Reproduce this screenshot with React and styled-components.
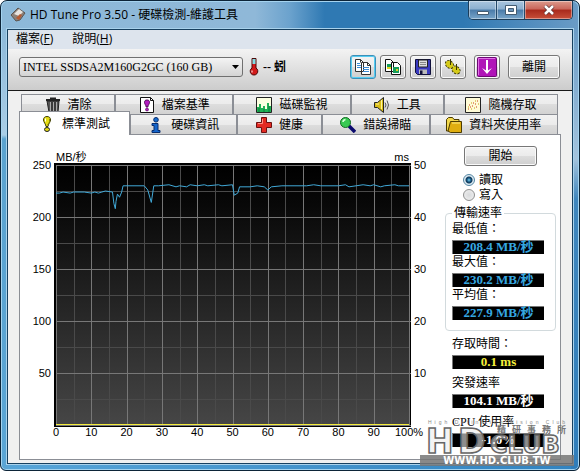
import React, { useState } from 'react';
import styled, { createGlobalStyle, css } from 'styled-components';

const SANS = "'Liberation Sans', 'Noto Sans CJK TC', sans-serif";
const SERIF = "'Liberation Serif', 'Noto Sans CJK TC', serif";
const CAPTION = "'Open Sans', 'Noto Sans CJK TC', sans-serif";

const GlobalStyle = createGlobalStyle`
  *, *::before, *::after {
    box-sizing: border-box;
  }
  body {
    margin: 0;
    background: white;
    color: black;
    font-family: ${SERIF};
    font-size: 12px;
    line-height: 14px;
  }
  button, select {
    font: inherit;
    color: inherit;
  }
`;

const Window = styled.div`
  position: relative;
  display: flex;
  flex-direction: column;
  min-height: 100vh;
  padding: 0 6px 6px;
  border: 1px solid #0c2438;
  border-radius: 7px 7px 6px 6px;
  box-shadow: inset 0 0 0 1px #a5d3ef;
  background:
    linear-gradient(to bottom, #6b9cc6 0, #a3c3dd 130px, #3f86bd 170px, #2f7dba 100%) right bottom / 8px calc(100% - 28px) no-repeat,
    linear-gradient(to bottom, #8db9d9 0, #a9cde6 106px, #5ba3d0 110px, #5aa5d5 100%) left bottom / 8px calc(100% - 28px) no-repeat,
    linear-gradient(to right, #8db9d9 0, #8fb8d8 44%, #6ba2cd 50%, #2f79b3 56%, #2f79b3 80%, #6b9cc6 100%) top / 100% 60px no-repeat,
    linear-gradient(to right, #58a5d8, #3183c0);
`;
const TitleBar = styled.header`
  display: flex;
  align-items: flex-start;
  height: 27px;
  padding-left: 3px;
`;
const TitleIcon = styled.svg`
  width: 16px;
  height: 16px;
  margin: 5px 4px 0 0;
`;
const Title = styled.h1`
  flex: 1;
  margin: 0;
  font-family: ${CAPTION};
  font-size: 12px;
  font-weight: 400;
  line-height: 28px;
`;
const Controls = styled.div`
  display: flex;
  height: 19px;
  border: 1px solid #1c3d5a;
  border-top: 0;
  border-radius: 0 0 5px 5px;
  overflow: hidden;
`;
const ControlButton = styled.button`
  display: flex;
  align-items: center;
  justify-content: center;
  width: ${({ $close }) => $close ? '47px' : '28px'};
  padding: 0;
  border: 0;
  border-right: ${({ $close }) => $close ? '0' : '1px solid #24496a'};
  box-shadow: inset 0 0 0 1px rgba(255, 255, 255, 0.4);
  background: ${({ $close }) => $close
    ? 'linear-gradient(#dc9a8c 0, #c9665a 45%, #a92a1c 50%, #c8503a 100%)'
    : 'linear-gradient(#a9c5de 0, #8bafcf 45%, #4a7ba9 50%, #78a5ca 100%)'};
`;
const Client = styled.main`
  flex: 1;
  display: flex;
  flex-direction: column;
  margin: 1px 0 0;
  border: 1px solid #17405f;
  outline: 1px solid #a9d2ec;
  background: #f0f0f0;
`;
const MenuBar = styled.nav`
  display: flex;
  gap: 19px;
  height: 19px;
  padding: 0 8px;
  background: #dde4ed;
  font-family: ${CAPTION};
  line-height: 18px;
`;
const MenuItem = styled.a`
  color: black;
  text-decoration: none;
`;
const Toolbar = styled.div`
  display: flex;
  align-items: center;
  height: 42px;
  padding: 0 12px 5px 11px;
  border-bottom: 1px solid #1a1a1a;
  background: linear-gradient(#f3f3f3, #cccccc);
`;
const DriveBox = styled.div`
  position: relative;
  flex: 0 1 224px;
`;
const DriveSelect = styled.select`
  display: block;
  width: 100%;
  height: 20px;
  padding: 0 20px 0 3px;
  appearance: none;
  border: 1px solid #707070;
  border-radius: 3px;
  background: linear-gradient(#f4f4f4, #d4d4d4);
  font-family: ${SERIF};
  font-size: 12px;
`;
const DriveArrow = styled.svg`
  position: absolute;
  top: 8px;
  right: 4px;
  width: 7px;
  height: 4px;
  pointer-events: none;
`;
const Temperature = styled.div`
  display: flex;
  flex: 1;
  align-items: center;
  gap: 4px;
  padding-left: 6px;
  font-weight: 700;
`;
const Tools = styled.div`
  display: flex;
  gap: 4px;
  margin-right: 8px;
`;
const buttonFace = css`
  border: 1px solid #777777;
  border-radius: 3px;
  box-shadow: inset 0 0 0 1px #fafafa;
  background: linear-gradient(#f3f3f3 0, #ebebeb 50%, #dddddd 50%, #cfcfcf 100%);
  font-family: ${SANS};
`;
const ToolButton = styled.button`
  ${buttonFace}
  display: flex;
  align-items: center;
  justify-content: center;
  width: 26px;
  height: 24px;
  padding: 0;

  ${({ $focused }) => $focused && css`
    border-color: #3c8fb8;
    box-shadow: inset 0 0 0 1px #55cdf2;
  `}
`;
const PushButton = styled.button`
  ${buttonFace}
  width: ${({ $wide }) => $wide ? '73px' : '52px'};
  height: ${({ $wide }) => $wide ? '20px' : '24px'};
  padding: 0;
`;
const Body = styled.div`
  flex: 1;
  display: flex;
  flex-direction: column;
  padding: 3px 11px;
`;
const TabRow = styled.div`
  display: grid;
  grid-template-columns: ${({ $columns }) => $columns};
  height: 20px;
  padding: 0 3px 0 ${({ $inset }) => $inset ? '2px' : '0'};
`;
const TabButton = styled.button`
  display: flex;
  align-items: center;
  justify-content: center;
  gap: 7px;
  min-width: 0;
  padding: 0;
  border: 1px solid #8b8e95;
  border-width: 1px 1px 0 1px;
  background: linear-gradient(#f2f2f2 0, #ebebeb 50%, #dddddd 50%, #d2d2d2 100%);
  font-family: ${SANS};
  line-height: 14px;
  white-space: nowrap;

  svg {
    flex: none;
    width: 16px;
    height: 16px;
  }

  ${({ $active }) => $active && css`
    z-index: 1;
    margin: -3px 0 -1px;
    background: white;
  `}
`;
const Panel = styled.section`
  flex: 1;
  display: flex;
  padding-right: 4px;
  border: 1px solid #8b8e95;
  background: white;
`;
const ChartArea = styled.div`
  flex: 1;
  min-width: 0;
`;
const ChartSvg = styled.svg`
  display: block;
  width: 100%;
  font-family: ${SANS};
  font-size: 11px;
`;
const Side = styled.aside`
  display: flex;
  flex-direction: column;
  flex: none;
  width: 111px;
  padding-top: 11px;
  font-family: ${SERIF};

  > button {
    align-self: center;
  }
`;
const Modes = styled.div`
  padding: 6px 0 4px 18px;
`;
const ModeLabel = styled.label`
  display: flex;
  align-items: center;
  gap: 4px;
  height: 15px;
`;
const ModeInput = styled.input`
  width: 12px;
  height: 12px;
  margin: 0;
  appearance: none;
  border: 1px solid #8e8f8f;
  border-radius: 50%;
  background: radial-gradient(circle, #d8dadc 0, #f2f2f2 100%);

  &:checked {
    border-color: #5586a3;
    background: radial-gradient(circle, #7ed3f3 0, #12547f 2px, #12395a 3px, #dcebf3 4px);
  }
`;
const Rates = styled.fieldset`
  min-width: 0;
  height: 125px;
  margin: 0 0 6px;
  padding: 2px 11px 0 6px;
  border: 1px solid #d2dadd;
  border-radius: 4px;

  legend {
    padding: 0 2px;
  }
`;
const Others = styled.div`
  padding: 0 12px 0 7px;
`;
const ReadingBlock = styled.div`
  margin-bottom: ${({ $loose }) => $loose ? '7px' : '1px'};
`;
const ReadingValue = styled.output`
  display: block;
  height: 14px;
  margin-top: 4px;
  border-top: 1px solid #777777;
  border-left: 1px solid #777777;
  background: black;
  color: ${({ $color }) => $color};
  font-size: 13px;
  font-weight: 700;
  line-height: 12px;
  text-align: center;
`;
const Watermark = styled.svg`
  position: absolute;
  right: 5px;
  bottom: 2px;
  width: 154px;
  height: 48px;
  pointer-events: none;
`;

const Trash = () => (
  <svg viewBox="0 0 16 16">
    <path d="M2 4h12l-1 11H4z" fill="#555" stroke="#222" />
    <path d="M1 3h14M5 1.5h6" stroke="#222" strokeWidth="2" />
    <path d="M5.5 5v9M8.5 5v9M11.5 5v9" stroke="#aaa" />
    <path d="M7 5v9M10 5v9" stroke="#222" />
  </svg>
);
const Bang = () => (
  <svg viewBox="0 0 16 16">
    <path d="M8 .5C5.5.5 4.5 2 4.5 4S7 8.500 7 10.500h2c0-2 2.500-4.500 2.500-6.500S10.500.5 8 .5z" fill="#e6dd13" stroke="#3a3a00" />
    <ellipse cx="8" cy="13.5" rx="2.5" ry="2" fill="#e6dd13" stroke="#222" />
    <path d="M6.5 2.500v3" stroke="#fff" />
    <path d="M10.500 3v3l-2 3" fill="none" stroke="#8d8608" />
  </svg>
);
const FileBench = () => (
  <svg viewBox="0 0 16 16">
    <path d="M1.5.5h10l3 3v12h-13z" fill="#fff" stroke="#111" />
    <path d="M11.5.5v3h3" fill="none" stroke="#111" />
    <path d="M8 3C6 3 5.5 4 5.500 5.500S7 8 7.200 10h1.600C9 8 10.500 7 10.500 5.500S10 3 8 3z" fill="#b31cc0" stroke="#4c0853" />
    <circle cx="8" cy="12.5" r="1.5" fill="#b31cc0" stroke="#4c0853" strokeWidth=".6" />
  </svg>
);
const Monitor = () => (
  <svg viewBox="0 0 16 16">
    <path d="M.5.5h15v15H.5z" fill="#fcffe0" stroke="#222" />
    <path d="M1 15v-5h2V7h2v4h2V9h2v3h2V6h2v3h2v6z" fill="#20b155" />
    <path d="M3 15v-4M8 15v-3M13 15V9" stroke="#087c3a" />
  </svg>
);
const Speaker = () => (
  <svg viewBox="0 0 16 16">
    <path d="M.5 5.500h3l6-5v15l-6-5h-3z" fill="#d9bd17" stroke="#222" />
    <path d="M7.5 3v9M2 7h3" stroke="#fff39a" />
    <path d="M11 5.500q2 2.500 0 5M13 3.500q3 4.500 0 9" fill="none" stroke="#555" />
  </svg>
);
const Scatter = () => (
  <svg viewBox="0 0 16 16">
    <path d="M.5.5h15v15H.5z" fill="#fffbd6" stroke="#222" />
    <path d="M3 12h1M5 10h1M4 8h1M7 9h1M8 6h1M10 7h1M12 4h1M11 10h1" stroke="#c53c14" />
    <path d="M3 10h1M6 12h1M9 11h1M10 4h1M13 7h1M6 6h1" stroke="#c0a010" />
  </svg>
);
const Info = () => (
  <svg viewBox="0 0 16 16">
    <circle cx="8" cy="2.8" r="2.3" fill="#176ed0" stroke="#082c6c" />
    <path d="M4 6.500h6v7h2v2H4v-2h2v-5H4z" fill="#1465cc" stroke="#082c6c" />
  </svg>
);
const Cross = () => (
  <svg viewBox="0 0 16 16">
    <path d="M5.5.5h5v5h5v5h-5v5h-5v-5h-5v-5h5z" fill="#e32a23" stroke="#6d1010" />
    <path d="M6.5 2v4.500H2" fill="none" stroke="#ff9188" />
  </svg>
);
const Magnifier = () => (
  <svg viewBox="0 0 16 16">
    <path d="M9 9l6 6" stroke="#0b0b6e" strokeWidth="3.5" />
    <circle cx="5.5" cy="5.5" r="5" fill="#38c952" stroke="#116a22" />
    <path d="M3 5q0-2 2.500-2.500" fill="none" stroke="#d7ffd9" strokeWidth="1.5" />
  </svg>
);
const Folder = () => (
  <svg viewBox="0 0 16 16">
    <path d="M.5 14V2.500l2-2h4l1.500 2h5V14z" fill="#f3d94d" stroke="#4b3b00" />
    <path d="M4.5 4.500h11v11h-11L2 14z" fill="#dfae10" stroke="#4b3b00" />
    <path d="M6 6h8" stroke="#fff08a" />
  </svg>
);
const CopyText = () => (
  <svg width="18" height="16" viewBox="0 0 18 16">
    <path d="M1.5.5h5l3 3v9h-8zM7.500 3.500h6l3 3v9h-9z" fill="#fff" stroke="#333" />
    <path d="M13.5 3.500v3h3M6.500.5v3" fill="none" stroke="#333" />
    <path d="M3 4.500h3M3 6.500h4M3 8.500h4M9 8.500h6M9 10.500h6M9 12.500h6" stroke="#3d8bd4" />
  </svg>
);
const CopyImage = () => (
  <svg width="18" height="16" viewBox="0 0 18 16">
    <path d="M1.5.5h5l3 3v9h-8zM7.500 3.500h6l3 3v9h-9z" fill="#fff" stroke="#111" />
    <path d="M3 5h4v5H3zM9 8h6v6H9z" fill="#169b59" />
    <path d="M3 8h4v2H3zM12 10h2v2h-2z" fill="#e0d523" />
  </svg>
);
const Floppy = () => (
  <svg width="16" height="16" viewBox="0 0 16 16">
    <path d="M.5.5h15v15h-13l-2-2z" fill="#3a3ac0" stroke="#10103c" />
    <path d="M3.5 1h9v7h-9z" fill="#ddd" stroke="#222" />
    <path d="M5 3.500h6M5 5.500h6" stroke="#888" />
    <path d="M4 10.500h8V15H4z" fill="#bbb" />
    <path d="M5 11.500h2.500V15H5z" fill="#10103c" />
  </svg>
);
const Gears = () => (
  <svg width="18" height="16" viewBox="0 0 18 16">
    <g fill="#d5ca18" stroke="#3b3700">
      <ellipse cx="5.5" cy="5.5" rx="4" ry="3" transform="rotate(40 5.5 5.5)" strokeWidth="2" strokeDasharray="2 1" />
      <ellipse cx="12" cy="11" rx="4" ry="3" transform="rotate(40 12 11)" strokeWidth="2" strokeDasharray="2 1" />
      <ellipse cx="5.5" cy="5.5" rx="4" ry="3" transform="rotate(40 5.5 5.5)" stroke="none" />
      <ellipse cx="12" cy="11" rx="4" ry="3" transform="rotate(40 12 11)" stroke="none" />
      <path d="M6.5 0v6M12.500 5v6" />
    </g>
  </svg>
);
const Download = () => (
  <svg width="20" height="20" viewBox="0 0 20 20">
    <rect x=".5" y=".5" width="19" height="19" rx="1" fill="#b015b8" stroke="#6d0874" />
    <path d="M1.5 18V1.500H18" fill="none" stroke="#df72e4" />
    <path d="M10 3v12" stroke="#fff" strokeWidth="2" />
    <path d="M5 11l5 6 5-6-5 3z" fill="#fff" />
  </svg>
);
const Thermometer = () => (
  <svg width="10" height="18" viewBox="0 0 10 18">
    <path d="M3 .5h4V10a3.800 3.800 0 1 1-4 0z" fill="#d21a1a" stroke="#4a0808" />
    <path d="M3.500 1h3v5h-3z" fill="#7fdce2" />
    <path d="M3 12.500v2" stroke="#fff" />
  </svg>
);

const TOP_TABS = [
  { label: '清除', icon: <Trash /> },
  { label: '檔案基準', icon: <FileBench /> },
  { label: '磁碟監視', icon: <Monitor /> },
  { label: '工具', icon: <Speaker /> },
  { label: '隨機存取', icon: <Scatter /> },
];
const BOTTOM_TABS = [
  { label: '標準測試', icon: <Bang />, active: true },
  { label: '硬碟資訊', icon: <Info /> },
  { label: '健康', icon: <Cross /> },
  { label: '錯誤掃瞄', icon: <Magnifier /> },
  { label: '資料夾使用率', icon: <Folder /> },
];
const TOOLS = [
  { name: 'copy text', icon: <CopyText />, focused: true },
  { name: 'copy image', icon: <CopyImage /> },
  { name: 'save', icon: <Floppy /> },
  { name: 'options', icon: <Gears /> },
];
const RATES = [
  { label: '最低值：', value: '208.4 MB/秒' },
  { label: '最大值：', value: '230.2 MB/秒' },
  { label: '平均值：', value: '227.9 MB/秒' },
];
const OTHERS = [
  { label: '存取時間：', value: '0.1 ms', color: '#f5f03c' },
  { label: '突發速率', value: '104.1 MB/秒', color: 'white' },
  { label: 'CPU 使用率', value: '-1.0%', color: 'white' },
];

// [position in %, MB/s]
const TRANSFER = [
  [0, 223], [1, 223], [2, 224], [4, 223], [5, 224], [8, 224], [10, 223], [11, 224], [12, 223],
  [13, 224], [14, 225], [16, 224], [16.4, 213], [16.8, 208], [17, 215], [17.4, 222],
  [18, 219], [18.6, 224], [19, 230], [25, 230], [26, 226], [27, 214], [27.7, 230], [29, 230],
  [32, 231], [34, 229], [35, 230], [37, 229], [38, 231], [40, 230], [42, 231], [43, 230],
  [46, 231], [47, 230], [50, 231], [50.5, 221], [51.5, 223], [52, 229], [55, 229], [57, 230],
  [59, 229], [60, 226], [61, 229], [64, 230], [71, 230], [73, 231], [75, 230], [80, 230],
  [82, 231], [83, 229], [85, 230], [87, 231], [89, 230], [90, 231], [92, 229], [93, 230],
  [96, 231], [97, 230], [100, 230],
];
const PLOT = { left: 36, top: 30, width: 353, height: 260 };
const xAt = percent => PLOT.left + (percent / 100) * PLOT.width;
const yAt = rate => PLOT.top + PLOT.height - (rate / 250) * PLOT.height;

const gridLines = (count, at) => Array.from({ length: count + 1 }, (_, i) => ({
  pos: Math.round(at(i)) + 0.5,
  major: i % 2 === 0,
}));
const COLS = gridLines(20, i => xAt(i * 5));
const ROWS = gridLines(10, i => yAt(i * 25));

const Chart = () => (
  <ChartSvg viewBox="0 0 425 322" role="img" aria-label="MB/秒">
    <defs>
      <linearGradient id="plot" x1="0" y1="0" x2="0" y2="1">
        <stop offset="0" stopColor="#000" />
        <stop offset=".15" stopColor="#080808" />
        <stop offset="1" stopColor="#464646" />
      </linearGradient>
    </defs>
    <rect x="34" y="28" width="357" height="264" fill="#000" />
    <rect x="36" y="30" width="353" height="260" fill="url(#plot)" />
    {[false, true].map(major => (
      <g key={String(major)} stroke={major ? '#777' : '#4a4a4a'}>
        {COLS.filter(line => line.major === major).map(({ pos }) => (
          <path key={pos} d={`M${pos} 30V290`} />
        ))}
        {ROWS.filter(line => line.major === major).map(({ pos }) => (
          <path key={pos} d={`M36 ${pos}H${major ? 391 : 389}`} />
        ))}
      </g>
    ))}
    <path d="M36 289.500H389" stroke="#f4ec3c" />
    <polyline
      points={TRANSFER.map(([x, y]) => `${xAt(x)},${yAt(y)}`).join(' ')}
      fill="none"
      stroke="#41a9d8"
    />
    <text x="36" y="26">MB/秒</text>
    <text x="389" y="26" textAnchor="end">ms</text>
    {[50, 100, 150, 200, 250].map(rate => (
      <g key={rate}>
        <text x="31" y={yAt(rate) + 4} textAnchor="end">{rate}</text>
        <text x="394" y={yAt(rate) + 4}>{rate / 5}</text>
      </g>
    ))}
    {[0, 10, 20, 30, 40, 50, 60, 70, 80, 90, 100].map(percent => (
      <text key={percent} x={xAt(percent)} y="301" textAnchor="middle">
        {percent === 100 ? '100%' : percent}
      </text>
    ))}
  </ChartSvg>
);

const Tabs = ({ items, columns, inset }) => (
  <TabRow $columns={columns} $inset={inset} role="tablist">
    {items.map(({ label, icon, active }) => (
      <TabButton key={label} type="button" role="tab" aria-selected={Boolean(active)} $active={active}>
        {icon}
        {label}
      </TabButton>
    ))}
  </TabRow>
);

const Reading = ({ label, value, color = '#35a7e0', loose }) => (
  <ReadingBlock $loose={loose}>
    <div>{label}</div>
    <ReadingValue $color={color} aria-label={label}>{value}</ReadingValue>
  </ReadingBlock>
);

const ClubMark = () => (
  <Watermark viewBox="0 0 154 48">
    <text x="8" y="4" fontFamily="Liberation Sans" fontSize="5" fill="#888" letterSpacing="3">
      High Definition Vision Club
    </text>
    <g fontFamily="DejaVu Sans" fontWeight="700" fill="#eee" fillOpacity=".6" stroke="#666" strokeWidth="1.5">
      <text x="6" y="33" fontSize="33">H</text>
      <text x="38" y="33" fontSize="33">D</text>
      <text x="70" y="33" fontSize="24">CLUB</text>
    </g>
    <text x="77" y="13" fontFamily="Noto Sans CJK TC" fontSize="9" fontWeight="700" fill="#777" letterSpacing="6">
      精研事務所
    </text>
    <path d="M0 35h154v11H0z" fill="#777" fillOpacity=".85" />
    <text x="77" y="44" fontFamily="DejaVu Sans" fontSize="10" fontWeight="700" fill="#fff" textAnchor="middle">
      WWW.HD.CLUB.TW
    </text>
  </Watermark>
);

const App = () => {
  const [mode, setMode] = useState('read');

  return (
    <>
      <GlobalStyle />
      <Window>
        <TitleBar>
          <TitleIcon viewBox="0 0 16 16">
            <path d="M1 9l7-7 7 5-5 7-4 1z" fill="#8c8078" stroke="#5b5550" />
            <path d="M4 8l5-5 4 3-4 4z" fill="#e8e4df" />
            <path d="M6 12l4-4 2 1-3 5z" fill="#b65a32" />
          </TitleIcon>
          <Title>HD Tune Pro 3.50 - 硬碟檢測-維護工具</Title>
          <Controls>
            <ControlButton type="button" aria-label="minimize">
              <svg width="12" height="12"><path d="M.5 7.500h11v3H.5z" fill="#fff" stroke="#445c72" /></svg>
            </ControlButton>
            <ControlButton type="button" aria-label="maximize">
              <svg width="12" height="10">
                <path d="M.5.5h11v9H.5z" fill="#fff" stroke="#445c72" />
                <path d="M3.500 3.500h5v3h-5z" fill="#6e96ba" stroke="#445c72" />
              </svg>
            </ControlButton>
            <ControlButton type="button" aria-label="close" $close>
              <svg width="12" height="10">
                <path d="M2 1l8 8M10 1L2 9" stroke="#5c3030" strokeWidth="4" />
                <path d="M2 1l8 8M10 1L2 9" stroke="#fff" strokeWidth="2.5" />
              </svg>
            </ControlButton>
          </Controls>
        </TitleBar>
        <Client>
          <MenuBar>
            <MenuItem href="#file">檔案(<u>F</u>)</MenuItem>
            <MenuItem href="#help">說明(<u>H</u>)</MenuItem>
          </MenuBar>
          <Toolbar>
            <DriveBox>
              <DriveSelect aria-label="drive">
                <option>INTEL SSDSA2M160G2GC (160 GB)</option>
              </DriveSelect>
              <DriveArrow viewBox="0 0 7 4"><path d="M0 0h7L3.500 4z" /></DriveArrow>
            </DriveBox>
            <Temperature>
              <Thermometer />
              <span>-- 蚓</span>
            </Temperature>
            <Tools>
              {TOOLS.map(({ name, icon, focused }) => (
                <ToolButton key={name} type="button" aria-label={name} $focused={focused}>{icon}</ToolButton>
              ))}
            </Tools>
            <Tools>
              <ToolButton type="button" aria-label="minimize to tray"><Download /></ToolButton>
            </Tools>
            <PushButton type="button">離開</PushButton>
          </Toolbar>
          <Body>
            <Tabs items={TOP_TABS} columns="94fr 118fr 117fr 93fr 114fr" inset />
            <Tabs items={BOTTOM_TABS} columns="111fr 107fr 84fr 108fr 128fr" />
            <Panel>
              <ChartArea>
                <Chart />
              </ChartArea>
              <Side>
                <PushButton type="button" $wide>開始</PushButton>
                <Modes>
                  <ModeLabel>
                    <ModeInput type="radio" name="mode" checked={mode === 'read'} onChange={() => setMode('read')} />
                    讀取
                  </ModeLabel>
                  <ModeLabel>
                    <ModeInput type="radio" name="mode" checked={mode === 'write'} onChange={() => setMode('write')} />
                    寫入
                  </ModeLabel>
                </Modes>
                <Rates>
                  <legend>傳輸速率</legend>
                  {RATES.map(rate => <Reading key={rate.label} {...rate} />)}
                </Rates>
                <Others>
                  {OTHERS.map(item => <Reading key={item.label} {...item} loose />)}
                </Others>
              </Side>
            </Panel>
          </Body>
        </Client>
        <ClubMark />
      </Window>
    </>
  );
};

export default App;
